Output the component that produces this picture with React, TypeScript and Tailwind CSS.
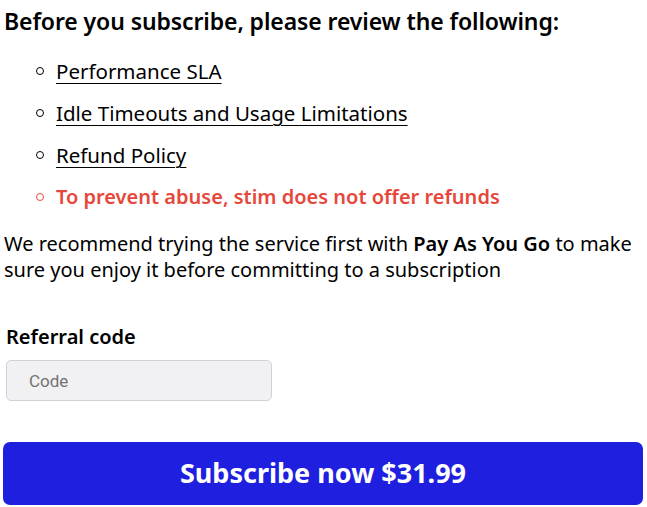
export default function App() {
  return (
    <div className="min-h-[507px] bg-white text-black font-['Noto_Sans',sans-serif]">
      <h2 className="pl-[4px] pt-[6px] text-[23px] leading-[30px] font-semibold tracking-[-0.1px]">
        Before you subscribe, please review the following:
      </h2>
      <ul className="mt-[22px] pl-[36px] flex flex-col gap-[16px] text-[20.5px] leading-[26px]">
        {["Performance SLA", "Idle Timeouts and Usage Limitations", "Refund Policy"].map((t) => (
          <li key={t} className="flex items-center gap-[12px]">
            <span className="w-[8px] h-[8px] rounded-full border border-black" />
            <a href="#" className="underline underline-offset-[4px] decoration-1">
              {t}
            </a>
          </li>
        ))}
        <li className="flex items-center gap-[12px] text-[20px] text-[#e5483b] font-semibold">
          <span className="w-[8px] h-[8px] rounded-full border border-[#e5483b]" />
          To prevent abuse, stim does not offer refunds
        </li>
      </ul>
      <p className="mt-[21px] pl-[4px] pr-[2px] text-[20px] leading-[26px]">
        We recommend trying the service first with <b className="font-semibold">Pay As You Go</b> to make
        sure you enjoy it before committing to a subscription
      </p>
      <div className="mt-[41px] pl-[6px] text-[20px] leading-[26px] font-semibold">Referral code</div>
      <input
        placeholder="Code"
        className="mt-[10px] ml-[6px] block w-[266px] h-[41px] rounded-[5px] border border-[#d1d1d6] bg-[#f1f1f3] px-[22px] text-[17px] font-['Roboto',sans-serif] placeholder:text-[#727272] outline-none"
      />
      <button className="mt-[41px] ml-[3px] w-[640px] h-[63px] rounded-[7px] bg-[#1f1fe0] text-white text-[27px] font-bold">
        Subscribe now $31.99
      </button>
    </div>
  )
}
